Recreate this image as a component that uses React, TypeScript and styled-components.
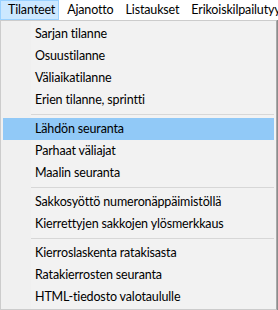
import React from "react";
import styled, { createGlobalStyle } from "styled-components";

const GlobalStyle = createGlobalStyle`
  html, body {
    margin: 0;
    padding: 0;
    background: #ffffff;
  }
  body {
    font-family: "Lato", "Liberation Sans", sans-serif;
    font-size: 12.5px;
    letter-spacing: -0.15px;
    color: #000000;
    overflow: hidden;
  }
`;

const Window = styled.div`
  width: 278px;
  height: 310px;
  display: flex;
  flex-direction: column;
  overflow: hidden;
  background: #ffffff;
`;

const MenuBar = styled.div`
  display: flex;
  height: 20px;
  flex-shrink: 0;
  background: #ffffff;
  white-space: nowrap;
`;

const MenuBarItem = styled.div<{ $active?: boolean }>`
  box-sizing: border-box;
  height: 20px;
  padding: 0 3px 1px 7px;
  display: flex;
  align-items: center;
  border: 1px solid ${(p) => (p.$active ? "#99d1ff" : "transparent")};
  background: ${(p) => (p.$active ? "#cce8ff" : "transparent")};
  flex-shrink: 0;
`;

const Dropdown = styled.div`
  box-sizing: border-box;
  width: 277px;
  padding: 2px 2px 1px 2px;
  border: 1px solid #cccccc;
  border-right-color: #a9a9a9;
  background: linear-gradient(to right, #f0f0f0 0, #f0f0f0 30px, #f2f2f2 30px);
  box-shadow: 1px 0 0 #8c8c8c;
  display: flex;
  flex-direction: column;
`;

const MenuItem = styled.div<{ $highlighted?: boolean }>`
  height: 22px;
  display: flex;
  align-items: center;
  padding-left: 32px;
  padding-bottom: 1px;
  box-sizing: border-box;
  background: ${(p) => (p.$highlighted ? "#91c9f7" : "transparent")};
  white-space: nowrap;
`;

const Separator = styled.div`
  height: 1px;
  margin: 3px 0 3px 28px;
  background: #d7d7d7;
`;

type Entry = { label: string; highlighted?: boolean } | "sep";

const entries: Entry[] = [
  { label: "Sarjan tilanne" },
  { label: "Osuustilanne" },
  { label: "Väliaikatilanne" },
  { label: "Erien tilanne, sprintti" },
  "sep",
  { label: "Lähdön seuranta", highlighted: true },
  { label: "Parhaat väliajat" },
  { label: "Maalin seuranta" },
  "sep",
  { label: "Sakkosyöttö numeronäppäimistöllä" },
  { label: "Kierrettyjen sakkojen ylösmerkkaus" },
  "sep",
  { label: "Kierroslaskenta ratakisasta" },
  { label: "Ratakierrosten seuranta" },
  { label: "HTML-tiedosto valotaululle" },
];

const topMenus = ["Tilanteet", "Ajanotto", "Listaukset", "Erikoiskilpailutyypit"];

export default function App() {
  return (
    <>
      <GlobalStyle />
      <Window>
        <MenuBar>
          {topMenus.map((m, i) => (
            <MenuBarItem key={m} $active={i === 0}>
              {m}
            </MenuBarItem>
          ))}
        </MenuBar>
        <Dropdown>
          {entries.map((e, i) =>
            e === "sep" ? (
              <Separator key={i} />
            ) : (
              <MenuItem key={i} $highlighted={e.highlighted}>
                {e.label}
              </MenuItem>
            )
          )}
        </Dropdown>
      </Window>
    </>
  );
}
